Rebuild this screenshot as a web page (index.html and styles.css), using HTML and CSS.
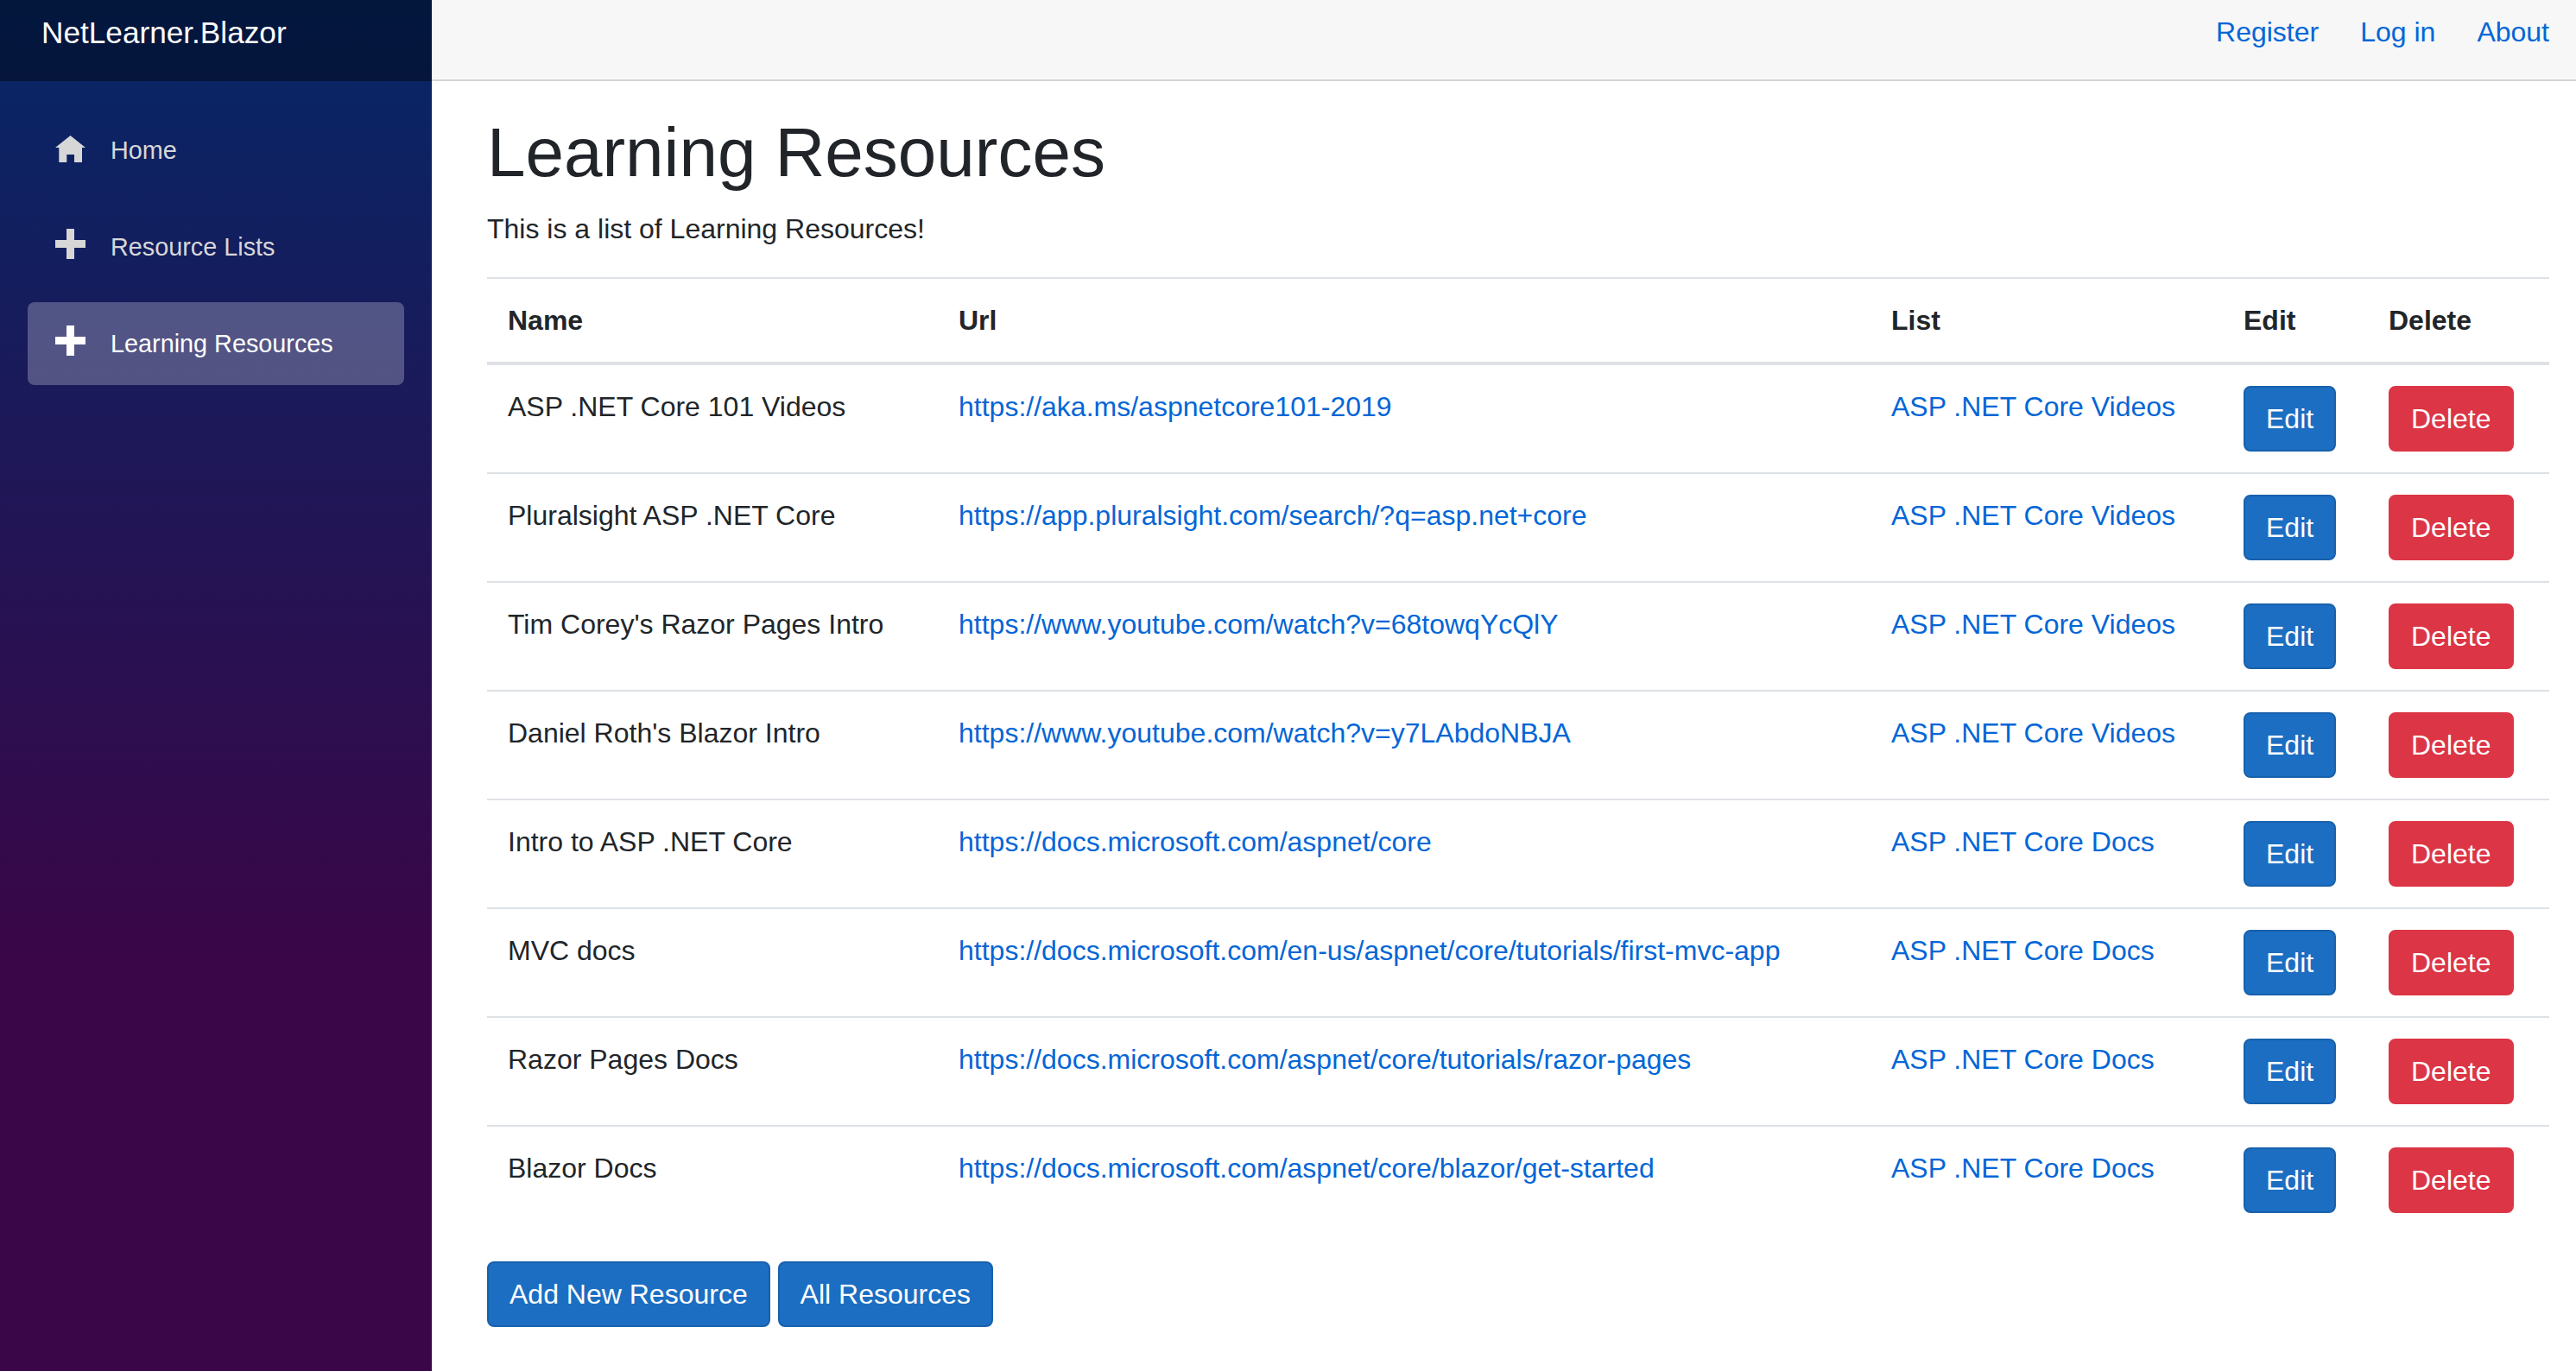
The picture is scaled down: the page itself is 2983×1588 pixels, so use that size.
FILE: index.html
```html
<!DOCTYPE html>
<html lang="en">
<head>
    <meta charset="UTF-8">
    <meta name="viewport" content="width=device-width, initial-scale=1.0">
    <title>Learning Resources</title>
    <link rel="stylesheet" href="styles.css">
</head>
<body>
    <div class="sidebar">
        <div class="brand-row">
            <a class="brand" href="#">NetLearner.Blazor</a>
        </div>
        <ul class="side-nav">
            <li class="side-item">
                <a class="side-link" href="#">
                    <svg class="side-icon" viewBox="0 0 35 35"><path d="M17.500 4 35 18h-4v17h-9v-9h-8.700v9h-9V18H0z"/></svg>
                    Home
                </a>
            </li>
            <li class="side-item">
                <a class="side-link" href="#">
                    <svg class="side-icon" viewBox="0 0 35 35"><path d="M13 0h9v13h13v9H22v13h-9V22H0v-9h13z"/></svg>
                    Resource Lists
                </a>
            </li>
            <li class="side-item">
                <a class="side-link active" href="#">
                    <svg class="side-icon" viewBox="0 0 35 35"><path d="M13 0h9v13h13v9H22v13h-9V22H0v-9h13z"/></svg>
                    Learning Resources
                </a>
            </li>
        </ul>
    </div>

    <div class="main">
        <div class="top-row">
            <a href="#">Register</a>
            <a href="#">Log in</a>
            <a href="#">About</a>
        </div>

        <div class="content">
            <h1>Learning Resources</h1>
            <p>This is a list of Learning Resources!</p>

            <table>
                <colgroup>
                    <col class="col-name">
                    <col class="col-url">
                    <col class="col-list">
                    <col class="col-edit">
                    <col class="col-delete">
                </colgroup>
                <thead>
                    <tr>
                        <th>Name</th>
                        <th>Url</th>
                        <th>List</th>
                        <th>Edit</th>
                        <th>Delete</th>
                    </tr>
                </thead>
                <tbody>
                    <tr>
                        <td>ASP .NET Core 101 Videos</td>
                        <td><a href="#">https://aka.ms/aspnetcore101-2019</a></td>
                        <td><a href="#">ASP .NET Core Videos</a></td>
                        <td><button class="btn btn-primary">Edit</button></td>
                        <td><button class="btn btn-danger">Delete</button></td>
                    </tr>
                    <tr>
                        <td>Pluralsight ASP .NET Core</td>
                        <td><a href="#">https://app.pluralsight.com/search/?q=asp.net+core</a></td>
                        <td><a href="#">ASP .NET Core Videos</a></td>
                        <td><button class="btn btn-primary">Edit</button></td>
                        <td><button class="btn btn-danger">Delete</button></td>
                    </tr>
                    <tr>
                        <td>Tim Corey's Razor Pages Intro</td>
                        <td><a href="#">https://www.youtube.com/watch?v=68towqYcQlY</a></td>
                        <td><a href="#">ASP .NET Core Videos</a></td>
                        <td><button class="btn btn-primary">Edit</button></td>
                        <td><button class="btn btn-danger">Delete</button></td>
                    </tr>
                    <tr>
                        <td>Daniel Roth's Blazor Intro</td>
                        <td><a href="#">https://www.youtube.com/watch?v=y7LAbdoNBJA</a></td>
                        <td><a href="#">ASP .NET Core Videos</a></td>
                        <td><button class="btn btn-primary">Edit</button></td>
                        <td><button class="btn btn-danger">Delete</button></td>
                    </tr>
                    <tr>
                        <td>Intro to ASP .NET Core</td>
                        <td><a href="#">https://docs.microsoft.com/aspnet/core</a></td>
                        <td><a href="#">ASP .NET Core Docs</a></td>
                        <td><button class="btn btn-primary">Edit</button></td>
                        <td><button class="btn btn-danger">Delete</button></td>
                    </tr>
                    <tr>
                        <td>MVC docs</td>
                        <td><a href="#">https://docs.microsoft.com/en-us/aspnet/core/tutorials/first-mvc-app</a></td>
                        <td><a href="#">ASP .NET Core Docs</a></td>
                        <td><button class="btn btn-primary">Edit</button></td>
                        <td><button class="btn btn-danger">Delete</button></td>
                    </tr>
                    <tr>
                        <td>Razor Pages Docs</td>
                        <td><a href="#">https://docs.microsoft.com/aspnet/core/tutorials/razor-pages</a></td>
                        <td><a href="#">ASP .NET Core Docs</a></td>
                        <td><button class="btn btn-primary">Edit</button></td>
                        <td><button class="btn btn-danger">Delete</button></td>
                    </tr>
                    <tr>
                        <td>Blazor Docs</td>
                        <td><a href="#">https://docs.microsoft.com/aspnet/core/blazor/get-started</a></td>
                        <td><a href="#">ASP .NET Core Docs</a></td>
                        <td><button class="btn btn-primary">Edit</button></td>
                        <td><button class="btn btn-danger">Delete</button></td>
                    </tr>
                </tbody>
            </table>

            <div class="actions">
                <button class="btn btn-primary">Add New Resource</button>
                <button class="btn btn-primary">All Resources</button>
            </div>
        </div>
    </div>
</body>
</html>
```

FILE: styles.css
```css
html, body {
    height: 100%;
}
body {
    margin: 0;
    display: flex;
    overflow: hidden;
    font-family: "Liberation Sans", Arial, sans-serif;
    font-size: 32px;
    line-height: 48px;
    color: #212529;
    background-color: #ffffff;
}
a {
    color: #0366d6;
    text-decoration: none;
}

/* sidebar */
.sidebar {
    width: 500px;
    flex-shrink: 0;
    background-image: linear-gradient(180deg, #052767 0%, #3a0647 70%);
}
.brand-row {
    height: 94px;
    padding: 0 0 18px 48px;
    box-sizing: border-box;
    display: flex;
    align-items: center;
    background-color: rgba(0, 0, 0, 0.4);
}
.brand {
    color: #ffffff;
    font-size: 35.2px;
}
.side-nav {
    list-style: none;
    margin: 0;
    padding: 32px 0 0;
}
.side-item {
    padding: 0 32px 16px;
}
.side-link {
    display: flex;
    align-items: center;
    height: 96px;
    padding-left: 32px;
    border-radius: 8px;
    font-size: 28.8px;
    color: #d7d7d7;
}
.side-link.active {
    color: #ffffff;
    background-color: rgba(255, 255, 255, 0.25);
}
.side-icon {
    width: 35px;
    height: 35px;
    margin-right: 29px;
    margin-top: -7px;
    fill: currentColor;
}

/* main */
.main {
    flex: 1;
    min-width: 0;
}
.top-row {
    height: 94px;
    padding: 0 31px 18px 0;
    box-sizing: border-box;
    display: flex;
    justify-content: flex-end;
    align-items: center;
    gap: 48px;
    background-color: #f7f7f7;
    border-bottom: 2px solid #d6d5d5;
}
.content {
    padding: 35px 31px 0 64px;
}
h1 {
    margin: 0 0 16px;
    font-size: 80px;
    font-weight: 500;
    line-height: 96px;
}
p {
    margin: 0 0 32px;
}

/* table */
table {
    width: 100%;
    table-layout: fixed;
    border-collapse: collapse;
    margin-bottom: 32px;
}
.col-name { width: 522px; }
.col-url { width: 1080px; }
.col-list { width: 408px; }
.col-edit { width: 168px; }
.col-delete { width: 210px; }
th, td {
    padding: 24px;
    text-align: left;
    vertical-align: top;
    border-top: 2px solid #dee2e6;
}
th {
    font-weight: 700;
    border-bottom: 4px solid #dee2e6;
}

/* buttons */
.btn {
    padding: 12px 24px;
    font-family: inherit;
    font-size: 32px;
    line-height: 48px;
    color: #ffffff;
    border: 2px solid transparent;
    border-radius: 8px;
    vertical-align: top;
}
.btn-primary {
    background-color: #1b6ec2;
    border-color: #1861ac;
}
.btn-danger {
    background-color: #dc3545;
    border-color: #dc3545;
}
```
